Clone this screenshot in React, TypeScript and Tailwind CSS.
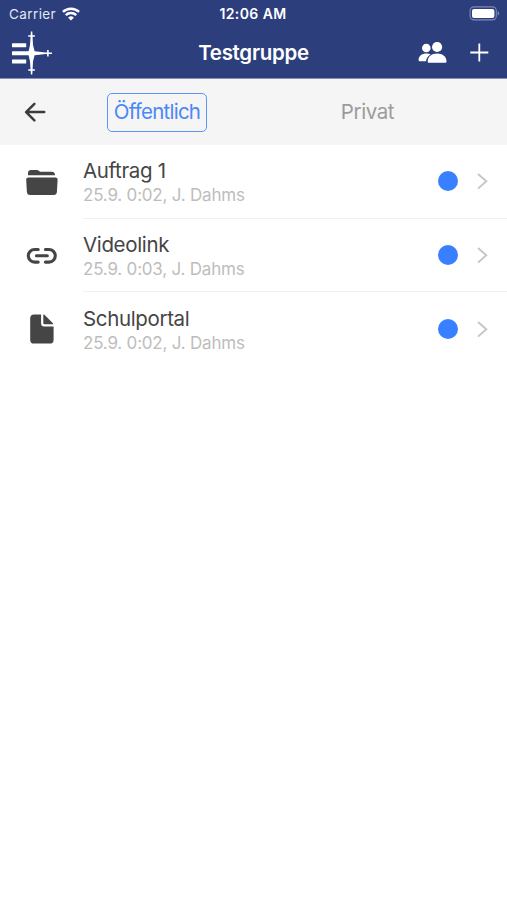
import React from "react";

function FolderIcon() {
  return (
    <svg width="34" height="34" viewBox="0 0 34 34" fill="currentColor">
      <path d="M3 10.2V8.3A3.3 3.3 0 0 1 6.3 5h5.4c1 0 1.6.3 2.4.9.7.6 1.3.9 2.3.9h10.4a3.3 3.3 0 0 1 3.2 3.4Z" />
      <path d="M3.6 12.4h26.6a2.4 2.4 0 0 1 2.4 2.7l-.7 12a3.2 3.2 0 0 1-3.2 2.9H5.1a3.2 3.2 0 0 1-3.2-2.9l-.7-12a2.4 2.4 0 0 1 2.4-2.7Z" />
    </svg>
  );
}

function LinkIcon() {
  return (
    <svg width="34" height="34" viewBox="0 0 34 34" fill="none" stroke="currentColor" strokeWidth="3.1" strokeLinecap="round">
      <path d="M13.2 10.5H9.6a6.3 6.3 0 0 0 0 12.6h3.6M20.4 10.5H24a6.3 6.3 0 0 1 0 12.6h-3.6M11.4 16.8h10.9" />
    </svg>
  );
}

function DocumentIcon() {
  return (
    <svg width="34" height="34" viewBox="0 0 34 34" fill="currentColor">
      <path d="M16.1 2.4v8.8a3.2 3.2 0 0 0 3.2 3.2h9.3v13.3a3.9 3.9 0 0 1-3.9 3.9H9.1a3.9 3.9 0 0 1-3.9-3.9V6.3a3.9 3.9 0 0 1 3.9-3.9Z" />
      <path d="M18.3 3c0-.6.5-.8.9-.4l8.7 8.7c.5.5.2 1-.4 1H19.4a1.1 1.1 0 0 1-1.1-1.1Z" />
    </svg>
  );
}

const items = [
  { title: "Auftrag 1", info: "25.9. 0:02, J. Dahms", icon: FolderIcon },
  { title: "Videolink", info: "25.9. 0:03, J. Dahms", icon: LinkIcon },
  { title: "Schulportal", info: "25.9. 0:02, J. Dahms", icon: DocumentIcon },
];

function WifiIcon() {
  return (
    <svg width="18" height="14" viewBox="0 0 18 14" fill="none" stroke="white" strokeWidth="2.5">
      <path d="M.9 4.9a11.8 11.8 0 0 1 16.2 0" />
      <path d="M3.8 8.1a7.4 7.4 0 0 1 10.4 0" />
      <path d="M9 13.6 6.1 10.7a4.1 4.1 0 0 1 5.8 0Z" fill="white" stroke="none" />
    </svg>
  );
}

function BatteryIcon() {
  return (
    <svg width="31" height="15" viewBox="0 0 31 15">
      <rect x="1.1" y="0.9" width="26.2" height="13" rx="3.8" fill="none" stroke="#7e89b5" strokeWidth="1.1" />
      <rect x="3" y="2.9" width="22.4" height="9.2" rx="2" fill="white" />
      <path d="M28.7 5.2c2 .6 2 3.8 0 4.4Z" fill="#7e89b5" />
    </svg>
  );
}

function PeopleIcon() {
  return (
    <svg width="30" height="24" viewBox="0 0 30 24" fill="white">
      <circle cx="9.3" cy="7" r="4.3" />
      <circle cx="20.1" cy="6" r="5.1" />
      <path d="M1.6 18.9c0-3.9 3.1-6.4 7.9-6.4 1.7 0 3 .3 4.2.9-3 1.7-4.4 3.8-4.7 6.9H3c-.9 0-1.4-.5-1.4-1.4Z" />
      <path d="M10.7 20.4c0-4.6 3.9-7.8 9.4-7.8s9.4 3.2 9.4 7.8c0 .8-.5 1.4-1.4 1.4H12c-.8 0-1.3-.6-1.3-1.4Z" />
    </svg>
  );
}

function MenuLogo() {
  return (
    <svg width="42" height="44" viewBox="0 0 42 44" fill="white">
      <rect x="1" y="12.3" width="14.2" height="3.9" rx="0.4" />
      <rect x="1" y="20.3" width="16" height="3.9" rx="0.4" />
      <rect x="1" y="28.6" width="14.2" height="3.9" rx="0.4" />
      <path d="M19.9.5h1.4L22 14l1.6 6.2 11.4 1.2h6v1.6h-6l-11.4 1.2L22 30.4l-.7 13.1h-1.4L19 30.4l-1.3-6L14 22.9v-1.4l3.7-1.4L19 14Z" />
      <path d="M17.2 4.2h6.7v1.6h-6.7zM17.2 38.2h6.7v1.6h-6.7zM36.1 19h1.6v6.6h-1.6z" />
    </svg>
  );
}

export default function App() {
  return (
    <div className="flex min-h-[900px] w-full flex-col bg-white font-['Inter','Liberation_Sans',sans-serif]">
      <header className="h-[79px] border-b border-[#8790b8] bg-[#2d3e7c] text-white">
        <div className="grid h-[27px] grid-cols-3 items-center pr-[7px] pl-[9px]">
          <div className="flex items-center gap-[6px]">
            <span className="pt-0.5 text-[13.5px] leading-none tracking-[0.4px] text-[#e2e6f3]">Carrier</span>
            <WifiIcon />
          </div>
          <span className="pt-px pr-[3px] text-center text-[14px] leading-none font-semibold tracking-[0.4px] whitespace-nowrap">12:06 AM</span>
          <div className="flex justify-end">
            <BatteryIcon />
          </div>
        </div>
        <div className="grid h-[51px] grid-cols-3 items-center">
          <button className="ml-[11px] w-[42px]">
            <MenuLogo />
          </button>
          <h1 className="pt-0.5 text-center text-[20.5px] leading-none font-semibold tracking-[-0.3px]">Testgruppe</h1>
          <div className="flex items-center justify-end gap-[22px] pr-[18px]">
            <PeopleIcon />
            <svg width="20" height="20" viewBox="0 0 20 20" stroke="white" strokeWidth="1.8">
              <path d="M10.3.5v18M1.3 9.5h18" />
            </svg>
          </div>
        </div>
      </header>

      <nav className="flex h-[66px] items-center bg-[#f5f5f5]">
        <button className="ml-[22px] w-[30px] text-[#3c3c3c]">
          <svg width="26" height="26" viewBox="0 0 26 26" fill="none" stroke="currentColor" strokeWidth="2.5" strokeLinecap="round" strokeLinejoin="round">
            <path d="m12.4 4.8-8.3 8.3 8.3 8.3M4.4 13.1h17.8" />
          </svg>
        </button>
        <div className="grid flex-1 grid-cols-2 pr-[35px] text-[20.5px] leading-none">
          <div className="flex justify-center">
            <button className="h-[39px] w-[100px] rounded-[5px] border-[1.5px] border-[#5b95f8] pt-px text-[#4a88f5] tracking-[-0.75px]">
              Öffentlich
            </button>
          </div>
          <button className="pt-px pl-px text-[#9b9b9b] tracking-[-0.4px]">Privat</button>
        </div>
      </nav>

      <ul>
        {items.map(({ title, info, icon: Icon }, i) => (
          <li key={title} className="flex h-[73.7px]">
            <div className="flex w-[83px] items-center pl-[25px] text-[#454545]">
              <Icon />
            </div>
            <div className={`flex flex-1 items-center pr-[17px] ${i < items.length - 1 ? "border-b border-[#f0f0f0]" : ""}`}>
              <div className="flex-1 pt-[3px]">
                <div className="text-[20.5px] leading-[25px] tracking-[-0.35px] text-[#454545]">{title}</div>
                <div className="text-[17px] leading-[24px] tracking-[-0.2px] text-[#bdbdbd]">{info}</div>
              </div>
              <span className="h-5 w-5 rounded-full bg-[#3880ff]" />
              <svg className="ml-4" width="16" height="18" viewBox="0 0 16 18" fill="none" stroke="#c6c6c6" strokeWidth="1.9">
                <path d="m4 2 8.3 7.3L4 16.6" />
              </svg>
            </div>
          </li>
        ))}
      </ul>
    </div>
  );
}
